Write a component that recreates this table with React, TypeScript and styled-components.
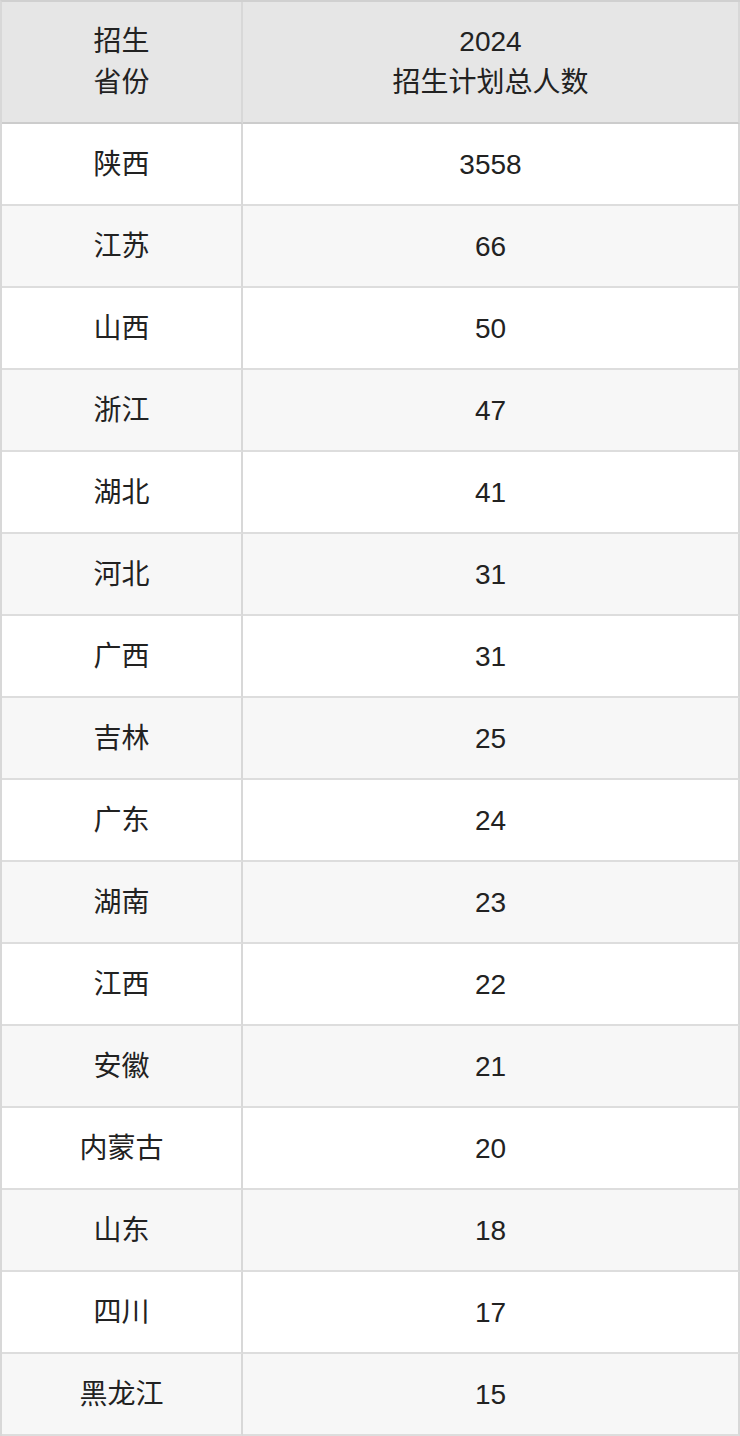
import React from "react";
import styled, { createGlobalStyle } from "styled-components";

const rows: [string, number][] = [
  ["陕西", 3558],
  ["江苏", 66],
  ["山西", 50],
  ["浙江", 47],
  ["湖北", 41],
  ["河北", 31],
  ["广西", 31],
  ["吉林", 25],
  ["广东", 24],
  ["湖南", 23],
  ["江西", 22],
  ["安徽", 21],
  ["内蒙古", 20],
  ["山东", 18],
  ["四川", 17],
  ["黑龙江", 15],
];

const GlobalStyle = createGlobalStyle`
  html, body {
    margin: 0;
    padding: 0;
    background: #fff;
  }
  body {
    font-family: "Liberation Sans", "Noto Sans CJK SC", sans-serif;
    color: #222;
  }
`;

const Table = styled.div`
  width: 740px;
  box-sizing: border-box;
  border-top: 2px solid #d0d0d0;
  border-left: 2px solid #d8d8d8;
`;

const Row = styled.div<{ $bg: string; $height: number }>`
  display: flex;
  height: ${(props) => props.$height}px;
  background: ${(props) => props.$bg};
`;

const Cell = styled.div<{ $width: number; $head?: boolean }>`
  box-sizing: border-box;
  width: ${(props) => props.$width}px;
  height: 100%;
  display: flex;
  align-items: center;
  justify-content: center;
  text-align: center;
  border-right: 2px solid #d8d8d8;
  border-bottom: 2px solid ${(props) => (props.$head ? "#cccccc" : "#dddddd")};
  font-size: 28px;
  line-height: 41px;
  color: #222;
`;

const App = () => {
  return (
    <>
      <GlobalStyle />
      <Table>
        <Row $bg="#e6e6e6" $height={122}>
          <Cell $width={241} $head>
            招生
            <br />
            省份
          </Cell>
          <Cell $width={497} $head>
            2024
            <br />
            招生计划总人数
          </Cell>
        </Row>
        {rows.map(([name, count], i) => (
          <Row key={name} $bg={i % 2 === 0 ? "#ffffff" : "#f7f7f7"} $height={82}>
            <Cell $width={241}>{name}</Cell>
            <Cell $width={497}>{count}</Cell>
          </Row>
        ))}
      </Table>
    </>
  );
};

export default App;
